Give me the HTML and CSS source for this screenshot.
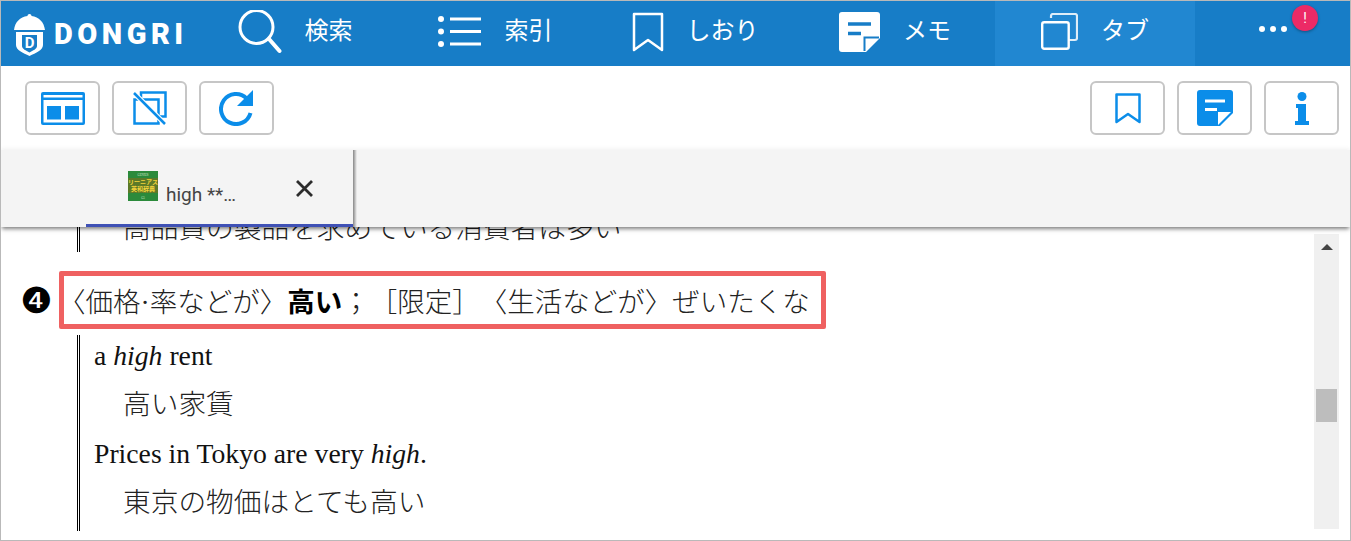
FILE: index.html
```html
<!DOCTYPE html>
<html lang="ja">
<head>
<meta charset="utf-8">
<title>DONGRI</title>
<link rel="stylesheet" href="styles.css">
</head>
<body>
<div class="app">
  <header class="topbar">
    <div class="logo">
      <svg class="logo-mark" viewBox="0 0 33 42" width="33" height="42">
        <path d="M16.500 0c1.500 0 2 1 2 2C26 3 31 8 32 16H1C2 8 7 3 14.500 2c0-1 .5-2 2-2Z" fill="#fff"/>
        <path d="M3 18h27v13c0 5-7 8-13.500 11C10 39 3 36 3 31Z" fill="#fff"/>
        <path d="M9 21h15v11c0 3-4 4.500-7.500 6.500C13 36.500 9 35 9 32Z" fill="#177dc7"/>
        <text x="16.500" y="34" class="logo-d">D</text>
      </svg>
      <span class="logo-text">DONGRI</span>
    </div>
    <nav class="nav">
      <a class="nav-item">
        <svg class="ico-search" viewBox="0 0 44 44" width="44" height="44"><circle cx="18.500" cy="17" r="16.500" fill="none" stroke="#fff" stroke-width="3"/><path d="M31 29 41.500 41" stroke="#fff" stroke-width="4" stroke-linecap="round"/></svg>
        <span class="nav-label">検索</span>
      </a>
      <a class="nav-item">
        <svg viewBox="0 0 44 32" width="44" height="32"><g fill="#fff"><circle cx="3" cy="3" r="3"/><circle cx="3" cy="15.500" r="3"/><circle cx="3" cy="28" r="3"/></g><path d="M12 3H43M12 15.500H43M12 28H43" stroke="#fff" stroke-width="3"/></svg>
        <span class="nav-label">索引</span>
      </a>
      <a class="nav-item">
        <svg viewBox="0 0 32 40" width="32" height="40"><path d="M2 2H30V38L16 28 2 38Z" fill="none" stroke="#fff" stroke-width="2.500" stroke-linejoin="round"/></svg>
        <span class="nav-label">しおり</span>
      </a>
      <a class="nav-item">
        <svg viewBox="0 0 41 40" width="41" height="40"><path d="M3 0H38a3 3 0 0 1 3 3V26L27 40H3a3 3 0 0 1-3-3V3a3 3 0 0 1 3-3Z" fill="#fff"/><path d="M9 12H32M9 21.500H22" stroke="#177dc7" stroke-width="3.500"/><path d="M25.500 39V25.500H40" fill="none" stroke="#177dc7" stroke-width="2"/></svg>
        <span class="nav-label">メモ</span>
      </a>
      <a class="nav-item is-active">
        <svg viewBox="0 0 37 37" width="37" height="37"><path d="M10 5V3a2 2 0 0 1 2-2H34a2 2 0 0 1 2 2V25a2 2 0 0 1-2 2H28" fill="none" stroke="#fff" stroke-width="2.200" opacity=".85"/><rect x="1.200" y="9.200" width="26.500" height="26.500" rx="2" fill="none" stroke="#fff" stroke-width="2.400"/></svg>
        <span class="nav-label">タブ</span>
      </a>
      <a class="nav-more">
        <span class="more-dots"><i></i><i></i><i></i></span>
        <span class="badge">!</span>
      </a>
    </nav>
  </header>

  <div class="toolbar">
    <div class="tool-group">
      <button class="tool">
        <svg viewBox="0 0 44 33" width="44" height="33"><rect width="44" height="33" rx="2" fill="#0b8de9"/><rect x="2.500" y="3" width="39" height="2.500" fill="#fff"/><rect x="2.500" y="8" width="39" height="22.500" fill="#fff"/><rect x="6" y="14" width="14" height="13.500" fill="#0b8de9"/><rect x="24" y="14" width="14" height="13.500" fill="#0b8de9"/></svg>
      </button>
      <button class="tool">
        <svg viewBox="0 0 34 34" width="34" height="34"><path d="M8 7V1.500H32.500V25.500H26" fill="none" stroke="#0b8de9" stroke-width="2.500"/><rect x="1.500" y="8.500" width="24" height="24" fill="none" stroke="#0b8de9" stroke-width="2.500"/><path d="M1 2 32 33" stroke="#fff" stroke-width="5"/><path d="M1 2 32 33" stroke="#0b8de9" stroke-width="2.500"/></svg>
      </button>
      <button class="tool">
        <svg viewBox="0 0 36 36" width="36" height="36"><path d="M27.600 8.400A15 15 0 1 0 31.500 22.900" fill="none" stroke="#0b8de9" stroke-width="4"/><path d="M34 0V16H18Z" fill="#0b8de9"/></svg>
      </button>
    </div>
    <div class="tool-group">
      <button class="tool">
        <svg viewBox="0 0 26 31" width="26" height="31"><path d="M1.500 1.500H24.500V29L13 21 1.500 29Z" fill="none" stroke="#0b8de9" stroke-width="2.500" stroke-linejoin="round"/></svg>
      </button>
      <button class="tool">
        <svg viewBox="0 0 36 36" width="36" height="36"><path d="M3 0H33a3 3 0 0 1 3 3V23L23 36H3a3 3 0 0 1-3-3V3a3 3 0 0 1 3-3Z" fill="#0b8de9"/><path d="M8 11H28M8 19.500H20" stroke="#fff" stroke-width="3"/><path d="M21 35V22H34Z" fill="#fff"/></svg>
      </button>
      <button class="tool">
        <svg viewBox="0 0 14 33" width="14" height="33"><circle cx="7" cy="4.500" r="4.500" fill="#0b8de9"/><path d="M1 12H11V29H14V33H0V29H3V16H1Z" fill="#0b8de9"/></svg>
      </button>
    </div>
  </div>

  <div class="tabstrip">
    <div class="tab">
      <div class="tab-label">
        <svg class="cover" viewBox="0 0 30 30" width="30" height="30">
          <rect width="30" height="30" fill="#2b8a3b"/><rect y="7" width="30" height="15" fill="#5c7a28"/>
          <text x="15" y="5" class="cover-s">GENIUS</text>
          <text x="15" y="13" class="cover-t">リーニアス</text>
          <text x="15" y="20" class="cover-t">英和辞典</text>
          <text x="15" y="28" class="cover-s">G5</text>
        </svg>
        <span class="tab-name">high **…</span>
      </div>
      <svg class="tab-close" viewBox="0 0 17 17" width="17" height="17"><path d="M1 1 16 16M16 1 1 16" stroke="#2c2c2c" stroke-width="2.800"/></svg>
    </div>
  </div>

  <div class="reader">
    <article class="entry">
      <div class="examples examples-prev">
        <p class="ja">高品質の製品を求めている消費者は多い</p>
      </div>
      <div class="sense">
        <span class="sense-no">❹</span>
        <div class="sense-box">〈価格·率などが〉<b>高い</b>；［限定］〈生活などが〉ぜいたくな</div>
      </div>
      <div class="examples">
        <p class="en">a <i>high</i> rent</p>
        <p class="ja">高い家賃</p>
        <p class="en">Prices in Tokyo are very <i>high</i>.</p>
        <p class="ja">東京の物価はとても高い</p>
      </div>
    </article>
    <div class="scrollbar">
      <span class="scroll-up"></span>
      <span class="scroll-thumb"></span>
    </div>
  </div>
</div>
</body>
</html>
```
FILE: styles.css
```css
* { box-sizing: border-box; }
html, body { margin: 0; padding: 0; }
body { background: #fff; overflow: hidden; }
.app {
  width: 1351px;
  height: 541px;
  border: 1px solid #b9b9b9;
  display: flex;
  flex-direction: column;
  overflow: hidden;
  background: #fff;
}
.topbar {
  height: 65px;
  flex: none;
  background: #177dc7;
  display: flex;
  color: #fff;
}
.logo {
  width: 194px;
  flex: none;
  display: flex;
  align-items: center;
  gap: 8px;
  padding-left: 12px;
}
.logo-mark { flex: none; margin-top: 2px; }
.logo-d { font: 700 15px "Roboto", sans-serif; fill: #fff; text-anchor: middle; }
.logo-text {
  font: 900 29px/1 "Roboto", sans-serif;
  letter-spacing: 4.500px;
  margin-top: 2px;
}
.nav { flex: 1; display: flex; }
.nav-item {
  width: 200px;
  flex: none;
  display: flex;
  align-items: center;
  justify-content: center;
  gap: 23px;
  padding-bottom: 4px;
  font: 400 24px/1 "Noto Sans CJK JP", sans-serif;
}
.nav-label { margin-bottom: 6px; }
.nav-item.is-active { background: #2187d1; }
.nav-more {
  flex: 1;
  position: relative;
  display: flex;
  align-items: center;
  padding-left: 64px;
}
.more-dots { display: flex; gap: 5px; margin-top: -10px; }
.more-dots i { width: 6px; height: 6px; border-radius: 50%; background: #fff; }
.badge {
  position: absolute;
  left: 97px;
  top: 4px;
  width: 26px;
  height: 26px;
  border-radius: 50%;
  background: #ec2a66;
  box-shadow: 0 1px 3px rgba(0, 0, 0, .35);
  color: #fff;
  font: 400 14px/26px "Roboto", sans-serif;
  text-align: center;
}
.toolbar {
  height: 84px;
  flex: none;
  display: flex;
  justify-content: space-between;
  padding: 15px 11px 0 24px;
}
.tool-group { display: flex; gap: 12px; }
.tool {
  width: 75px;
  height: 54px;
  padding: 0;
  background: #fff;
  border: 2px solid #c6c6c6;
  border-radius: 6px;
  display: flex;
  align-items: center;
  justify-content: center;
}
.tabstrip {
  height: 77px;
  flex: none;
  position: relative;
  z-index: 2;
  background: #f4f4f4;
  box-shadow: 0 3px 4px -1px rgba(0, 0, 0, .5), 0 -2px 4px rgba(0, 0, 0, .04);
  display: flex;
}
.tab {
  width: 352px;
  flex: none;
  padding-left: 85px;
  display: flex;
  position: relative;
}
.tab::before {
  content: "";
  position: absolute;
  top: 0;
  bottom: 0;
  left: 100%;
  width: 4px;
  background: linear-gradient(to right, rgba(0, 0, 0, .45), rgba(0, 0, 0, 0));
}
.tab::after {
  content: "";
  position: absolute;
  left: 85px;
  right: 0;
  bottom: 0;
  height: 3px;
  background: #3f51b5;
}
.tab-label { display: flex; align-items: flex-start; padding-left: 42px; padding-top: 21px; gap: 8px; }
.cover { flex: none; }
.cover-s { font: 3px "Liberation Serif", serif; fill: #d8ecd0; text-anchor: middle; }
.cover-t { font: 700 6px "Noto Sans CJK JP", sans-serif; fill: #f2d23a; text-anchor: middle; }
.tab-name { font: 400 19px/1 "Roboto", "Liberation Sans", sans-serif; color: #454545; margin-top: 14px; white-space: nowrap; }
.tab-close { margin: 30px 0 0 60px; flex: none; }
.reader {
  flex: 1;
  min-height: 0;
  display: flex;
  overflow: hidden;
  padding-right: 11px;
}
.entry {
  flex: 1;
  min-width: 0;
  font: 300 27.700px/49px "Liberation Serif", "Noto Sans CJK JP", serif;
  color: #222;
  text-spacing-trim: space-all;
}
.entry p { margin: 0; height: 49px; }
.en { line-height: 41px; color: #111; }
.examples {
  margin-left: 76px;
  border-left: 3px double #000;
  padding-left: 14px;
}
.examples-prev { margin-top: -24px; height: 49px; overflow: hidden; }
.ja { padding-left: 29px; line-height: 41px; }
.examples-prev .ja { line-height: 51px; }
.sense {
  display: flex;
  align-items: center;
  height: 58px;
  margin: 19px 0 6px;
  padding-left: 19px;
}
.sense-no {
  width: 39px;
  flex: none;
  margin-top: 2px;
  font: 36px/1 "DejaVu Sans", sans-serif;
  color: #000;
}
.sense-box {
  width: 767px;
  height: 58px;
  border: 5px solid #ef6161;
  border-radius: 2px;
  font-size: 27.500px;
  line-height: 54px;
  text-indent: -6px;
  white-space: nowrap;
  overflow: hidden;
}
.sense-box b { font-weight: 700; color: #000; }
.scrollbar {
  width: 25px;
  flex: none;
  height: 295px;
  margin-top: 7px;
  background: #f0f0f0;
  display: flex;
  flex-direction: column;
  align-items: center;
  padding-top: 10px;
}
.scroll-up {
  width: 0;
  height: 0;
  border: 6px solid transparent;
  border-top: 0;
  border-bottom: 6px solid #444;
}
.scroll-thumb {
  width: 21px;
  height: 33px;
  margin-top: 139px;
  background: #bdbdbd;
}
```
